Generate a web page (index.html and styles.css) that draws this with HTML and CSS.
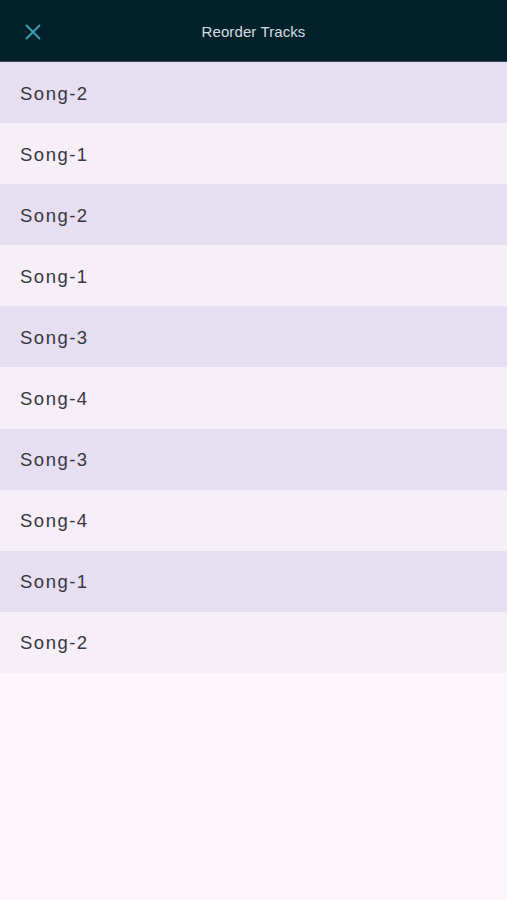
FILE: index.html
```html
<!DOCTYPE html>
<html lang="en">
<head>
    <meta charset="utf-8" />
    <link rel="stylesheet" href="styles.css">
</head>
<body>
    <div class="header">
        <a class="close" href="#">
            <svg width="18" height="18" viewBox="0 0 18 18">
                <path d="M2 2L16 16M16 2L2 16" stroke="#3a9db0" stroke-width="2" fill="none" />
            </svg>
        </a>
        <div class="title">Reorder Tracks</div>
    </div>

    <ul class="trackList">
        <li>Song-2</li>
        <li>Song-1</li>
        <li>Song-2</li>
        <li>Song-1</li>
        <li>Song-3</li>
        <li>Song-4</li>
        <li>Song-3</li>
        <li>Song-4</li>
        <li>Song-1</li>
        <li>Song-2</li>
    </ul>
</body>
</html>
```

FILE: styles.css
```css
* {
    padding: 0;
    margin: 0;
}

li {
    list-style: none;
}

body {
    background: #fcf6fc;
    font-family: "Liberation Sans", Arial, sans-serif;
}

.header {
    height: 61px;
    background: #02212a;
    border-bottom: 1px solid #3c4b55;
    display: flex;
    align-items: center;
    justify-content: center;
    position: relative;
}

.header .close {
    position: absolute;
    left: 24px;
    top: 23px;
    display: block;
    width: 18px;
    height: 18px;
}

.header .title {
    color: #d6dce0;
    font-size: 15px;
    letter-spacing: 0.1px;
    padding-top: 2px;
}

.trackList li {
    height: 61.1px;
    box-sizing: border-box;
    display: flex;
    align-items: center;
    padding: 2px 0 0 20px;
    font-size: 18.5px;
    letter-spacing: 1.5px;
    color: #38363d;
    background: #f6eef9;
}

.trackList li:nth-child(odd) {
    background: #e6def1;
}
```
